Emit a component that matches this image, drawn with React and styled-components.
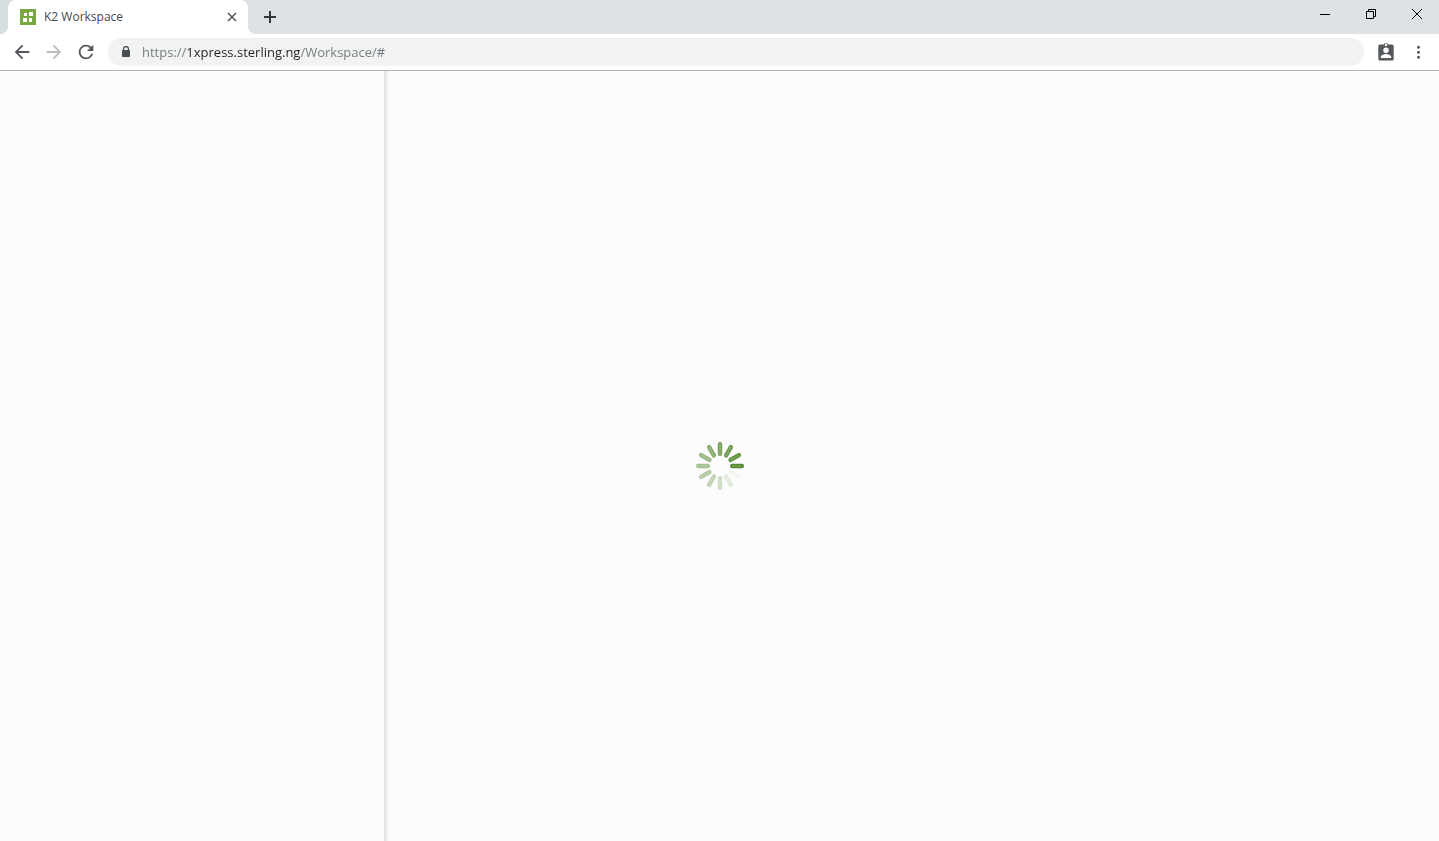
import React from "react"
import styled, { createGlobalStyle } from "styled-components"

const SPOKES = [
  { angle: 0, opacity: 0.78 },
  { angle: 30, opacity: 0.84 },
  { angle: 60, opacity: 0.92 },
  { angle: 90, opacity: 1 },
  { angle: 120, opacity: 0.05 },
  { angle: 150, opacity: 0.15 },
  { angle: 180, opacity: 0.28 },
  { angle: 210, opacity: 0.36 },
  { angle: 240, opacity: 0.44 },
  { angle: 270, opacity: 0.52 },
  { angle: 300, opacity: 0.6 },
  { angle: 330, opacity: 0.7 },
]

const Spinner = () => (
  <svg width="48" height="48" viewBox="0 0 48 48" aria-hidden="true">
    {SPOKES.map(({ angle, opacity }) => (
      <g
        key={angle}
        opacity={opacity}
        transform={`rotate(${angle} 24 24)`}
        strokeLinecap="round"
      >
        <path d="M24 2.200v9.600" stroke="#548530" strokeWidth="4.400" />
        <path d="M24 2.200v9.600" stroke="#6b9a48" strokeWidth="2" />
      </g>
    ))}
  </svg>
)

const App = () => {
  return (
    <>
      <GlobalStyle />
      <Browser>
        <TabStrip>
          <Tab>
            <svg width="16" height="16" viewBox="0 0 16 16" aria-hidden="true">
              <path fill="#7aa840" d="M0 0h16v16H0z" />
              <path
                fill="#fff"
                d="M4 4h3v3H4zM9 3h4v4H9zM3 9h4v4H3zM9 9h3v4H9z"
              />
            </svg>
            <TabTitle>K2 Workspace</TabTitle>
            <TabClose type="button" aria-label="Close tab">
              <svg width="10" height="10" viewBox="0 0 10 10">
                <path d="M1 1l8 8M9 1L1 9" stroke="#55595d" strokeWidth="1.600" />
              </svg>
            </TabClose>
          </Tab>
          <NewTab type="button" aria-label="New tab">
            <svg width="12" height="12" viewBox="0 0 12 12">
              <path d="M6 0v12M0 6h12" stroke="#35383b" strokeWidth="2" />
            </svg>
          </NewTab>
          <WindowControls>
            <WindowButton type="button" aria-label="Minimize">
              <svg width="12" height="12" viewBox="0 0 12 12">
                <path d="M1 6.500h10" />
              </svg>
            </WindowButton>
            <WindowButton type="button" aria-label="Restore">
              <svg width="12" height="12" viewBox="0 0 12 12">
                <path d="M1.500 3.500h7v7h-7zM3.500 3.500v-2h7v7h-2" />
              </svg>
            </WindowButton>
            <WindowButton type="button" aria-label="Close">
              <svg width="12" height="12" viewBox="0 0 12 12">
                <path d="M1 1l10 10M11 1L1 11" />
              </svg>
            </WindowButton>
          </WindowControls>
        </TabStrip>

        <Toolbar>
          <ToolButton type="button" aria-label="Back">
            <svg width="20" height="20" viewBox="1 1 22 22">
              <path d="M20 11H7.830l5.590-5.590L12 4l-8 8 8 8 1.410-1.410L7.830 13H20v-2z" />
            </svg>
          </ToolButton>
          <ToolButton type="button" aria-label="Forward" $muted>
            <svg width="20" height="20" viewBox="1 1 22 22">
              <path d="M12 4l-1.410 1.410L16.170 11H4v2h12.170l-5.580 5.590L12 20l8-8z" />
            </svg>
          </ToolButton>
          <ToolButton type="button" aria-label="Reload">
            <svg width="20" height="20" viewBox="1 1 22 22">
              <path d="M17.650 6.350A7.958 7.958 0 0 0 12 4c-4.420 0-7.990 3.580-7.990 8s3.570 8 7.990 8c3.730 0 6.840-2.550 7.730-6h-2.080A5.990 5.990 0 0 1 12 18c-3.310 0-6-2.690-6-6s2.690-6 6-6c1.660 0 3.140.690 4.220 1.780L13 11h7V4l-2.350 2.350z" />
            </svg>
          </ToolButton>
          <Omnibox>
            <svg width="10" height="12" viewBox="0 0 10 12" aria-hidden="true">
              <path d="M2.500 5V3a2.500 2.500 0 0 1 5 0v2" fill="none" stroke="#4b4e51" strokeWidth="1.300" />
              <rect x="1" y="4" width="8" height="7" rx="1" fill="#4b4e51" />
            </svg>
            <Address
              type="text"
              aria-label="Address"
              spellCheck="false"
              defaultValue="https://1xpress.sterling.ng/Workspace/#"
            />
          </Omnibox>
          <ToolButton type="button" aria-label="Profile">
            <svg width="20" height="20" viewBox="0 0 20 20">
              <path
                fillRule="evenodd"
                d="M4 2.600h3.700a2.400 2.400 0 0 1 4.600 0H16a1.700 1.700 0 0 1 1.700 1.700v12.600A1.700 1.700 0 0 1 16 18.600H4a1.700 1.700 0 0 1-1.700-1.700V4.300A1.700 1.700 0 0 1 4 2.600zM10 1.800a1.200 1.200 0 1 0 0 2.400 1.200 1.200 0 0 0 0-2.400zM10 5.600a2.700 2.700 0 1 0 0 5.400 2.700 2.700 0 0 0 0-5.400zM4.800 16h10.400v-1.200c0-1.900-3.400-2.900-5.200-2.900s-5.200 1-5.200 2.900z"
              />
            </svg>
          </ToolButton>
          <ToolButton type="button" aria-label="Menu">
            <svg width="20" height="20" viewBox="0 0 20 20">
              <circle cx="10.500" cy="5.300" r="1.500" />
              <circle cx="10.500" cy="10.300" r="1.500" />
              <circle cx="10.500" cy="15.300" r="1.500" />
            </svg>
          </ToolButton>
        </Toolbar>

        <Page>
          <Sidebar />
          <Content />
          <Loading role="status" aria-label="Loading">
            <Spinner />
          </Loading>
        </Page>
      </Browser>
    </>
  )
}

export default App

const GlobalStyle = createGlobalStyle`
  * {
    box-sizing: border-box;
  }
  body {
    margin: 0;
    font-family: "Open Sans", "Noto Sans", sans-serif;
  }
  button {
    display: flex;
    align-items: center;
    justify-content: center;
    padding: 0;
    border: 0;
    background: none;
  }
`

const Browser = styled.div`
  display: flex;
  flex-direction: column;
  min-height: 100vh;
`

//---TAB STRIP
const TabStrip = styled.header`
  display: flex;
  height: 34px;
  padding-left: 8px;
  background: linear-gradient(90deg, #d4dddf, #dee1e5 260px);
`

const Tab = styled.div`
  position: relative;
  display: flex;
  align-items: center;
  gap: 8px;
  width: 240px;
  padding: 0 8px 0 12px;
  border-radius: 8px 8px 0 0;
  background: #fff;

  /* flared feet on both sides of the tab */
  &::before,
  &::after {
    content: "";
    position: absolute;
    bottom: 0;
    width: 8px;
    height: 8px;
  }
  &::before {
    right: 100%;
    background: radial-gradient(circle at 0 0, transparent 8px, #fff 8px);
  }
  &::after {
    left: 100%;
    background: radial-gradient(circle at 100% 0, transparent 8px, #fff 8px);
  }
`

const TabTitle = styled.span`
  flex: 1;
  font-size: 12px;
  line-height: 16px;
  color: #45494d;
`

const TabClose = styled.button`
  width: 16px;
  height: 16px;
`

const NewTab = styled.button`
  width: 28px;
  height: 34px;
  margin-left: 8px;
`

const WindowControls = styled.div`
  display: flex;
  margin-left: auto;
`

const WindowButton = styled.button`
  width: 46px;
  height: 28px;
  padding-left: 2px;

  svg {
    fill: none;
    stroke: #000;
  }
`

//---TOOLBAR
const Toolbar = styled.nav`
  display: flex;
  align-items: center;
  height: 37px;
  padding: 0 5px 0 6px;
  border-bottom: 1px solid #b4b2b4;
  background: #fff;
`

const ToolButton = styled.button`
  width: 32px;
  height: 28px;

  svg {
    fill: ${({ $muted }) => ($muted ? "#b9bbbd" : "#55585c")};
  }
`

const Omnibox = styled.label`
  display: flex;
  flex: 1;
  align-items: center;
  gap: 11px;
  height: 28px;
  margin: 0 6px;
  padding: 0 13px;
  border-radius: 14px;
  background: #f1f3f3;
`

/* the host part of the address is darker than the rest */
const Address = styled.input`
  flex: 1;
  min-width: 0;
  height: 20px;
  padding: 0;
  border: 0;
  outline: 0;
  font-family: inherit;
  font-size: 13px;
  line-height: 20px;
  color: transparent;
  caret-color: #202124;
  background: linear-gradient(
    90deg,
    #74787c 45px,
    #202124 45px,
    #202124 159px,
    #74787c 159px
  );
  background-clip: text;
`

//---PAGE
const Page = styled.main`
  position: relative;
  display: grid;
  flex: 1;
  grid-template-columns: 384px 1fr;
  background: #fcfcfc;
`

const Sidebar = styled.aside`
  background: #fcfcfc;
`

const Content = styled.section`
  background: linear-gradient(90deg, #dedede, #efefef 3px, #fcfcfc 5px);
`

const Loading = styled.div`
  position: absolute;
  inset: 0;
  display: flex;
  align-items: center;
  justify-content: center;
  padding-top: 20px;
`
